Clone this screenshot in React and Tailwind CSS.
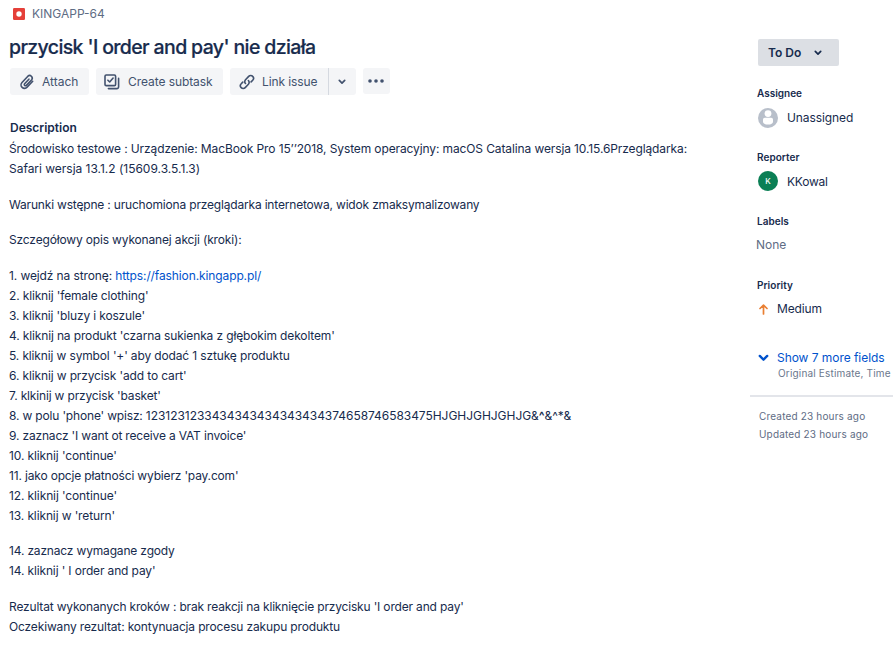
const Line = ({ children, className = "" }) => (
  <div className="h-5 leading-5 whitespace-nowrap">
    <span className={className}>{children}</span>
  </div>
);

const Paperclip = () => (
  <svg width="16" height="18" viewBox="0 0 16 18" fill="none" stroke="#42526e" strokeWidth="1.6" strokeLinecap="round" strokeLinejoin="round">
    <path d="m9.900 6.200-4.300 4.600a1.200 1.200 0 0 0 1.800 1.600l5.300-5.700a2.600 2.600 0 0 0-3.800-3.500L3 9.500a3.500 3.500 0 0 0 5.100 4.800l5.600-6" />
  </svg>
);

const Subtask = () => (
  <svg width="16" height="16" viewBox="0 0 16 16" fill="none" stroke="#42526e" strokeWidth="1.6" strokeLinecap="round" strokeLinejoin="round">
    <rect x="1" y="1" width="10.6" height="10.6" rx="1.2" />
    <path d="m3.9 6.2 1.8 1.8 3.4-4M14.6 4.4v8.4a1.8 1.8 0 0 1-1.8 1.8H4.4" />
  </svg>
);

const LinkIcon = () => (
  <svg width="16" height="16" viewBox="0 0 16 16" fill="none" stroke="#42526e" strokeWidth="1.6" strokeLinecap="round" strokeLinejoin="round">
    <path d="M6.5 9.5a2.9 2.9 0 0 1 0-3.7l3.2-3.4a2.7 2.7 0 0 1 4 0 2.7 2.7 0 0 1 0 3.8l-1.6 1.7" />
    <path d="M9.4 6.5a2.9 2.9 0 0 1 0 3.7l-3.2 3.4a2.7 2.7 0 0 1-4 0 2.7 2.7 0 0 1 0-3.8l1.6-1.7" />
  </svg>
);

const Chevron = ({ color, size = 8 }) => (
  <svg width={size} height={size * 0.75} viewBox="0 0 8 6" fill="none" stroke={color} strokeWidth="1.7" strokeLinecap="round" strokeLinejoin="round">
    <path d="m1.3 1.4 2.7 2.7 2.7-2.7" />
  </svg>
);

export default function App() {
  return (
    <div className="flex h-[645px] w-[893px] overflow-hidden bg-white font-['Inter','Liberation_Sans',sans-serif] text-[12px] text-[#172b4d]">
      <main className="w-[750px] shrink-0 pl-[9px]">
        <div className="flex h-7 items-center pl-1 text-[#5e6c84]">
          <svg width="12" height="12" viewBox="0 0 12 12">
            <rect width="12" height="12" rx="1.2" fill="#e5403a" />
            <circle cx="6" cy="6" r="2.7" fill="#fff" />
          </svg>
          <span className="ml-[7px]">KINGAPP-64</span>
        </div>
        <h1 className="mt-[5px] h-7 text-[19.5px] leading-7 font-medium whitespace-nowrap [-webkit-text-stroke:0.2px_#172b4d]">
          <span className="tracking-[-0.63px]">przycisk 'I order and pay' nie działa</span>
        </h1>
        <div className="mt-[7px] ml-px flex h-[27px] text-[#42526e]">
          <button className="flex w-[79px] items-center rounded-[3px] bg-[#f4f5f7] pl-[9px]">
            <Paperclip />
            <span className="ml-[7px]">Attach</span>
          </button>
          <button className="ml-[7px] flex w-[127px] items-center rounded-[3px] bg-[#f4f5f7] pl-2 whitespace-nowrap">
            <Subtask />
            <span className="ml-2 tracking-[-0.07px]">Create subtask</span>
          </button>
          <button className="ml-[7px] flex w-[98px] items-center rounded-l-[3px] bg-[#f4f5f7] pl-[9px] whitespace-nowrap">
            <LinkIcon />
            <span className="ml-[7px] tracking-[-0.1px]">Link issue</span>
          </button>
          <button className="flex w-7 items-center justify-center rounded-r-[3px] border-l border-[#d5d9e0] bg-[#f4f5f7] pr-px">
            <Chevron color="#42526e" />
          </button>
          <button className="ml-[7px] flex h-[26px] w-[27px] items-center justify-center rounded-[3px] bg-[#f4f5f7] pr-px">
            <svg width="16" height="4" viewBox="0 0 16 4" fill="#42526e">
              <circle cx="2" cy="2" r="1.8" />
              <circle cx="8" cy="2" r="1.8" />
              <circle cx="14" cy="2" r="1.8" />
            </svg>
          </button>
        </div>
        <h2 className="mt-[23px] ml-px h-5 leading-5 font-semibold">Description</h2>
        <div className="mt-px">
          <Line className="tracking-[-0.115px]">Środowisko testowe : Urządzenie: MacBook Pro 15’’2018, System operacyjny: macOS Catalina wersja 10.15.6Przeglądarka:</Line>
          <Line className="tracking-[-0.02px]">Safari wersja 13.1.2 (15609.3.5.1.3)</Line>
        </div>
        <div className="mt-4">
          <Line className="tracking-[-0.185px]">Warunki wstępne : uruchomiona przeglądarka internetowa, widok zmaksymalizowany</Line>
        </div>
        <div className="mt-[15px]">
          <Line className="tracking-[-0.16px]">Szczegółowy opis wykonanej akcji (kroki):</Line>
        </div>
        <div className="mt-4">
          <Line className="tracking-[-0.11px]">1. wejdź na stronę: <a className="text-[#0052cc]">https://fashion.kingapp.pl/</a></Line>
          <Line className="tracking-[-0.15px]">2. kliknij 'female clothing'</Line>
          <Line className="tracking-[-0.15px]">3. kliknij 'bluzy i koszule'</Line>
          <Line className="tracking-[-0.14px]">4. kliknij na produkt 'czarna sukienka z głębokim dekoltem'</Line>
          <Line className="tracking-[-0.14px]">5. kliknij w symbol '+' aby dodać 1 sztukę produktu</Line>
          <Line className="tracking-[-0.13px]">6. kliknij w przycisk 'add to cart'</Line>
          <Line className="tracking-[-0.16px]">7. klkinij w przycisk 'basket'</Line>
          <Line className="tracking-[-0.17px]">8. w polu 'phone' wpisz: <span className="tracking-[-0.045px]">1231231233434343434343434374658746583475HJGHJGHJGHJG&<b>^</b>&^*&</span></Line>
          <Line className="tracking-[-0.17px]">9. zaznacz 'I want ot receive a VAT invoice'</Line>
          <Line className="tracking-[-0.11px]">10. kliknij 'continue'</Line>
          <Line className="tracking-[-0.165px]">11. jako opcje płatności wybierz 'pay.com'</Line>
          <Line className="tracking-[-0.11px]">12. kliknij 'continue'</Line>
          <Line className="tracking-[-0.12px]">13. kliknij w 'return'</Line>
        </div>
        <div className="mt-[15px]">
          <Line className="tracking-[-0.17px]">14. zaznacz wymagane zgody</Line>
          <Line className="tracking-[-0.14px]">14. kliknij ' I order and pay'</Line>
        </div>
        <div className="mt-4">
          <Line className="tracking-[-0.17px]">Rezultat wykonanych kroków : brak reakcji na kliknięcie przycisku 'I order and pay'</Line>
          <Line className="tracking-[-0.15px]">Oczekiwany rezultat: kontynuacja procesu zakupu produktu</Line>
        </div>
      </main>
      <aside className="w-[143px] shrink-0 pt-[39px]">
        <button className="ml-2 flex h-[27px] w-[81px] items-center rounded-[2px] bg-[#dcdfe4] pl-[10px] font-semibold">
          <span className="w-[46px] text-left">To Do</span>
          <Chevron color="#172b4d" />
        </button>
        <div className="mt-[19px] ml-[7px] h-4 text-[10px] leading-4 font-semibold">Assignee</div>
        <div className="mt-[6px] ml-2 flex h-[22px] items-center">
          <svg width="20" height="20" viewBox="0 0 20 20">
            <circle cx="10" cy="10" r="10" fill="#b8bfca" />
            <circle cx="10" cy="5.600" r="3.400" fill="#fff" />
            <path d="M5 11.500a1.700 1.700 0 0 1 1.700-1.700h6.600a1.700 1.700 0 0 1 1.700 1.700v2.200c0 1.600-2 2.900-5 2.900s-5-1.300-5-2.900z" fill="#fff" />
          </svg>
          <span className="ml-[9px] tracking-[-0.1px]">Unassigned</span>
        </div>
        <div className="mt-5 ml-[7px] h-4 text-[10px] leading-4 font-semibold tracking-[0.04px]">Reporter</div>
        <div className="mt-[5px] ml-2 flex h-[22px] items-center">
          <div className="flex size-5 items-center justify-center rounded-full bg-[#0b7f55] text-[8px] font-medium text-white">K</div>
          <span className="ml-[9px] pt-[2px] tracking-[-0.25px]">KKowal</span>
        </div>
        <div className="mt-[21px] ml-[7px] h-4 text-[10px] leading-4 font-semibold tracking-[0.04px]">Labels</div>
        <div className="mt-[6px] ml-[6px] h-5 leading-5 text-[#5e6c84]">None</div>
        <div className="mt-[22px] ml-[7px] h-4 text-[10px] leading-4 font-semibold tracking-[0.04px]">Priority</div>
        <div className="mt-[5px] ml-[9px] flex h-[22px] items-center">
          <svg width="9" height="11" viewBox="0 0 9 11" fill="none" stroke="#e97f33" strokeWidth="1.7" strokeLinecap="round" strokeLinejoin="round">
            <path d="M4.500 10V1.200M1 4.500l3.500-3.300L8 4.500" />
          </svg>
          <span className="ml-[9px] tracking-[-0.15px]">Medium</span>
        </div>
        <div className="mt-[28px] ml-2 flex h-5 items-center text-[#0052cc]">
          <Chevron color="#0052cc" size={11} />
          <span className="ml-2 tracking-[-0.05px] whitespace-nowrap">Show 7 more fields</span>
        </div>
        <div className="ml-7 h-3 text-[10px] leading-[10px] tracking-[0.17px] whitespace-nowrap text-[#6b778c]">Original Estimate, Time</div>
        <div className="mt-[15px] h-[2px] bg-[#e3e5ea]" />
        <div className="mt-[10px] ml-[9px] text-[10px] leading-[18px] tracking-[0.17px] whitespace-nowrap text-[#5e6c84]">
          <div>Created 23 hours ago</div>
          <div>Updated 23 hours ago</div>
        </div>
      </aside>
    </div>
  );
}
